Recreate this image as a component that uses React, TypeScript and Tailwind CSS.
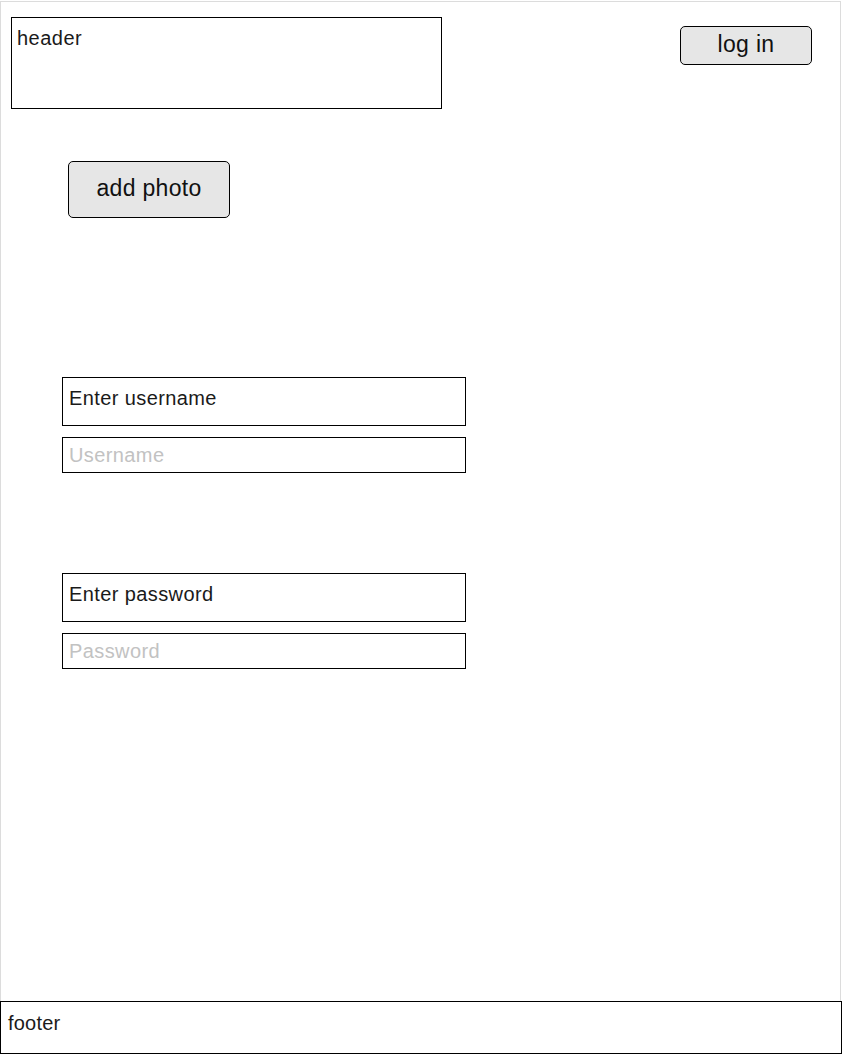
const FONT = "font-['Liberation_Sans',Arial,sans-serif]";

type FieldProps = {
  label: string;
  placeholder: string;
  type?: string;
};

function Field({ label, placeholder, type = 'text' }: FieldProps) {
  return (
    <div className="flex flex-col gap-[11px]">
      <div className="h-[49px] w-[404px] border border-black px-[6px] pt-[8px] text-[20px] leading-[24px] tracking-[0.4px] text-[#1a1a1a]">
        {label}
      </div>
      <input
        type={type}
        placeholder={placeholder}
        className="h-[36px] w-[404px] border border-black px-[6px] text-[20px] tracking-[0.4px] text-black outline-none placeholder:text-[#c2c2c2]"
      />
    </div>
  );
}

export default function App() {
  return (
    <div className={`${FONT} flex h-[1054px] w-[842px] flex-col bg-white`}>
      <div className="mt-px flex w-[841px] flex-1 flex-col border-x border-t border-[#dcdcdc]">
        <div className="flex items-start">
          <div className="ml-[10px] mt-[15px] h-[92px] w-[431px] border border-black px-[5px] pt-[8px] text-[20px] leading-[24px] tracking-[0.5px] text-[#1a1a1a]">
            header
          </div>
          <button className="ml-auto mr-[28px] mt-[24px] h-[39px] w-[132px] rounded-[5px] border border-black bg-[#e6e6e6] pb-[3px] text-[23px] leading-none tracking-[0.3px] text-[#111]">
            log in
          </button>
        </div>

        <button className="ml-[67px] mt-[52px] h-[57px] w-[162px] rounded-[5px] border border-black bg-[#e6e6e6] pb-[3px] text-[23px] leading-none tracking-[0.3px] text-[#111]">
          add photo
        </button>

        <div className="ml-[61px] mt-[159px] flex flex-col gap-[100px]">
          <Field label="Enter username" placeholder="Username" />
          <Field label="Enter password" placeholder="Password" type="password" />
        </div>
      </div>
      <div className="h-[53px] w-[842px] border border-black px-[7px] pt-[9px] text-[20px] leading-[24px] tracking-[0.2px] text-[#1a1a1a]">
        footer
      </div>
    </div>
  );
}
